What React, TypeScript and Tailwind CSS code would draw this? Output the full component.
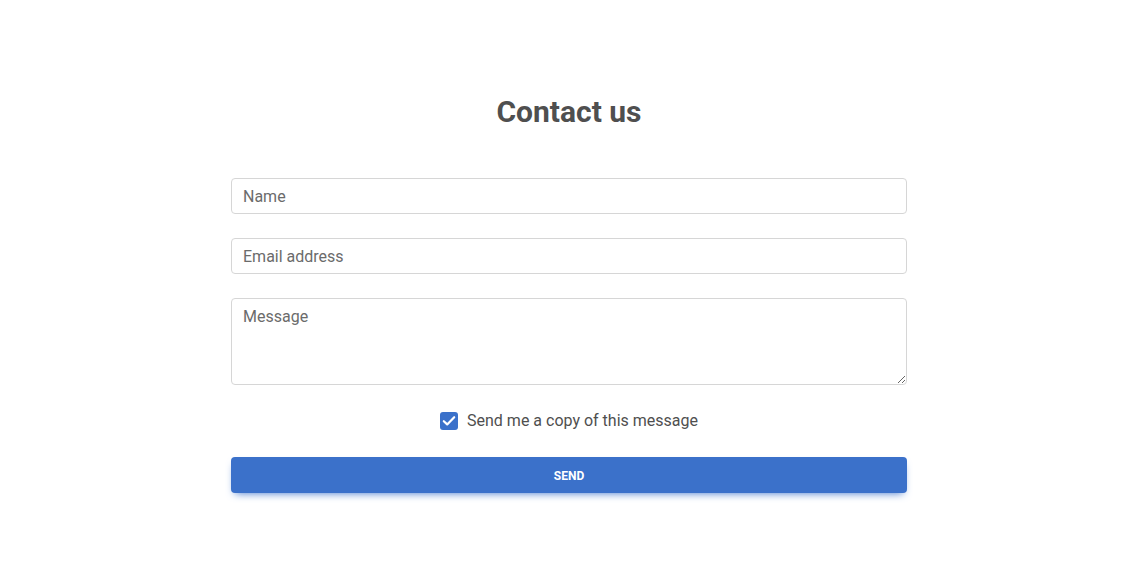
import React from "react";

export default function App() {
  return (
    <div className="min-h-[584px] w-full bg-white pl-[4px]" style={{ fontFamily: "Roboto, 'Noto Sans', sans-serif" }}>
      <div className="mx-auto w-[676px] pt-[94px]">
        <h1 className="text-center text-[30px] font-bold leading-[36px] text-[#4f4f4f]">Contact us</h1>
        <form className="mt-[48px] flex flex-col" onSubmit={(e) => e.preventDefault()}>
          <input
            className="h-[36px] w-full rounded-[4px] border border-[#d6d6d6] px-[11px] text-[16px] text-[#4f4f4f] outline-none placeholder:text-[#6b6b6b]"
            placeholder="Name"
          />
          <input
            className="mt-[24px] h-[36px] w-full rounded-[4px] border border-[#d6d6d6] px-[11px] text-[16px] text-[#4f4f4f] outline-none placeholder:text-[#6b6b6b]"
            placeholder="Email address"
          />
          <textarea
            className="mt-[24px] block h-[87px] w-full rounded-[4px] border border-[#d6d6d6] px-[11px] py-[6px] text-[16px] leading-[24px] text-[#4f4f4f] outline-none placeholder:text-[#6b6b6b]"
            placeholder="Message"
          />
          <label className="mt-[24px] flex items-center justify-center gap-[9px] text-[16px] text-[#4f4f4f]">
            <span className="flex h-[18px] w-[18px] items-center justify-center rounded-[3px] bg-[#3b71ca]">
              <svg width="14" height="12" viewBox="0 0 14 12" fill="none">
                <path d="M1.8 6.2 L5.2 9.4 L12.2 2.2" stroke="white" strokeWidth="2.2" strokeLinecap="round" strokeLinejoin="round" />
              </svg>
            </span>
            <span>Send me a copy of this message</span>
          </label>
          <button
            type="submit"
            className="mt-[24px] h-[36px] w-full rounded-[4px] bg-[#3b71ca] pt-[2px] text-[12px] font-bold uppercase text-white shadow-[0_4px_9px_-4px_#3b71ca]"
          >
            Send
          </button>
        </form>
      </div>
    </div>
  );
}
